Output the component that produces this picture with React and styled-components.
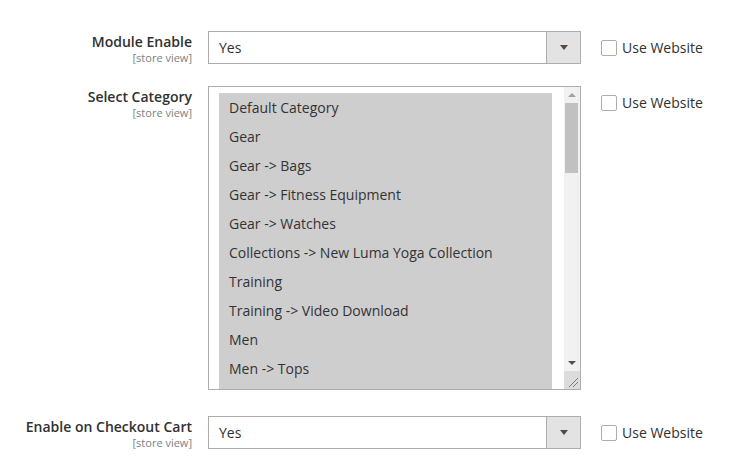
import React from "react";
import styled, { createGlobalStyle } from "styled-components";

const GlobalStyle = createGlobalStyle`
  body {
    margin: 0;
    background: #ffffff;
    font-family: "Open Sans", "Liberation Sans", sans-serif;
    color: #303030;
  }
`;

const categories = [
  "Default Category",
  "Gear",
  "Gear -> Bags",
  "Gear -> Fitness Equipment",
  "Gear -> Watches",
  "Collections -> New Luma Yoga Collection",
  "Training",
  "Training -> Video Download",
  "Men",
  "Men -> Tops",
];

function App() {
  return (
    <>
      <GlobalStyle />
      <Form>
        <Row top="31px">
          <Label>
            <LabelText>Module Enable</LabelText>
            <Scope>[store view]</Scope>
          </Label>
          <Select>
            <SelectValue>Yes</SelectValue>
            <SelectButton>
              <Arrow />
            </SelectButton>
          </Select>
          <UseWebsite>
            <Checkbox />
            <CheckLabel>Use Website</CheckLabel>
          </UseWebsite>
        </Row>

        <Row top="22px">
          <Label>
            <LabelText>Select Category</LabelText>
            <Scope>[store view]</Scope>
          </Label>
          <MultiSelect>
            <OptionList>
              {categories.map((c) => (
                <Option key={c}>{c}</Option>
              ))}
            </OptionList>
            <ScrollBar>
              <ScrollArrowBox>
                <ScrollArrow up light />
              </ScrollArrowBox>
              <Thumb />
              <ScrollSpacer />
              <ScrollArrowBox>
                <ScrollArrow />
              </ScrollArrowBox>
              <Resizer>
                <svg width="11" height="11" viewBox="0 0 11 11">
                  <path d="M1 10 L10 1 M5 10 L10 5" stroke="#7a7a7a" strokeWidth="1" />
                </svg>
              </Resizer>
            </ScrollBar>
          </MultiSelect>
          <UseWebsite>
            <Checkbox />
            <CheckLabel>Use Website</CheckLabel>
          </UseWebsite>
        </Row>

        <Row top="26px">
          <Label>
            <LabelText>Enable on Checkout Cart</LabelText>
            <Scope>[store view]</Scope>
          </Label>
          <Select>
            <SelectValue>Yes</SelectValue>
            <SelectButton>
              <Arrow />
            </SelectButton>
          </Select>
          <UseWebsite>
            <Checkbox />
            <CheckLabel>Use Website</CheckLabel>
          </UseWebsite>
        </Row>
      </Form>
    </>
  );
}

const Form = styled.div`
  display: flex;
  flex-direction: column;
  width: 729px;
`;

const Row = styled.div`
  display: grid;
  grid-template-columns: 192px 389px 1fr;
  margin-top: ${(p) => p.top};
  align-items: start;
`;

const Label = styled.div`
  display: flex;
  flex-direction: column;
  align-items: flex-end;
  padding-top: 1px;
`;

const LabelText = styled.span`
  font-size: 14px;
  font-weight: 600;
  line-height: 19px;
  color: #303030;
`;

const Scope = styled.span`
  font-size: 11px;
  line-height: 13px;
  color: #808080;
`;

const Select = styled.div`
  margin-left: 16px;
  height: 33px;
  box-sizing: border-box;
  border: 1px solid #adadad;
  display: flex;
  align-items: stretch;
  background: #ffffff;
`;

const SelectValue = styled.div`
  flex: 1;
  display: flex;
  align-items: center;
  padding-left: 10px;
  font-size: 14px;
  color: #303030;
`;

const SelectButton = styled.div`
  width: 33px;
  background: #e3e3e3;
  border-left: 1px solid #adadad;
  display: flex;
  align-items: center;
  justify-content: center;
`;

const Arrow = styled.span`
  width: 0;
  height: 0;
  border-left: 4px solid transparent;
  border-right: 4px solid transparent;
  border-top: 5px solid #514943;
`;

const UseWebsite = styled.label`
  margin-left: 20px;
  padding-top: 9px;
  display: flex;
  align-items: center;
  gap: 5px;
`;

const Checkbox = styled.span`
  width: 16px;
  height: 16px;
  box-sizing: border-box;
  border: 1px solid #adadad;
  border-radius: 2px;
  background: #ffffff;
`;

const CheckLabel = styled.span`
  font-size: 14px;
  line-height: 16px;
  color: #303030;
`;

const MultiSelect = styled.div`
  margin-left: 16px;
  height: 304px;
  box-sizing: border-box;
  border: 1px solid #adadad;
  display: flex;
  overflow: hidden;
`;

const OptionList = styled.div`
  width: 333px;
  margin: 6px 0 0 10px;
  background: #cecece;
  overflow: hidden;
`;

const Option = styled.div`
  height: 29px;
  line-height: 29px;
  padding-left: 10px;
  font-size: 14px;
  color: #333333;
  white-space: nowrap;
`;

const ScrollBar = styled.div`
  margin-left: auto;
  width: 16px;
  background: #f1f1f1;
  display: flex;
  flex-direction: column;
`;

const ScrollArrowBox = styled.div`
  height: 16px;
  display: flex;
  align-items: center;
  justify-content: center;
`;

const ScrollArrow = styled.span`
  width: 0;
  height: 0;
  border-left: 4px solid transparent;
  border-right: 4px solid transparent;
  ${(p) =>
    p.up
      ? `border-bottom: 4px solid ${p.light ? "#a6a0a6" : "#505050"};`
      : `border-top: 4px solid #505050;`}
`;

const Thumb = styled.div`
  margin: 0 2px 0 1px;
  height: 70px;
  background: #c1c1c1;
`;

const ScrollSpacer = styled.div`
  flex: 1;
`;

const Resizer = styled.div`
  height: 17px;
  background: #dcdcdc;
  display: flex;
  align-items: flex-end;
  justify-content: flex-end;
  padding: 0 1px 1px 0;
`;

export default App;
